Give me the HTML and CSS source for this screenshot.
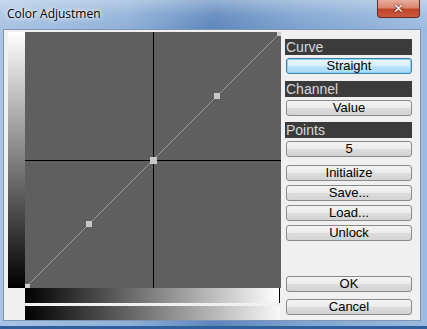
FILE: index.html
```html
<!DOCTYPE html>
<html>
<head>
<meta charset="utf-8">
<link rel="stylesheet" href="styles.css">
</head>
<body>
<div class="window">
  <div class="titlebar">
    <span class="title">Color Adjustmen</span>
    <div class="close"><span class="x">&#x2715;</span></div>
  </div>
  <div class="client">
    <div class="graph">
      <div class="vbar"></div>
      <svg class="canvas" width="256" height="256" viewBox="0 0 256 256">
        <rect x="0" y="0" width="256" height="256" fill="#5f5f5f"/>
        <line x1="128.5" y1="0" x2="128.5" y2="256" stroke="#000" stroke-width="1"/>
        <line x1="0" y1="128.5" x2="256" y2="128.5" stroke="#000" stroke-width="1"/>
        <line x1="0" y1="256" x2="256" y2="0" stroke="#9a9a9a" stroke-width="1"/>
        <rect x="0" y="252" width="5" height="5" fill="#d0d0d0"/>
        <rect x="61" y="189" width="6" height="6" fill="#c8c8c8"/>
        <rect x="125" y="125" width="7" height="7" fill="#c8c8c8"/>
        <rect x="189" y="61" width="6" height="6" fill="#c8c8c8"/>
        <rect x="252" y="0" width="5" height="4" fill="#d0d0d0"/>
      </svg>
      <div class="corner"></div>
      <div class="hbar1"></div>
      <div class="corner2"></div>
      <div class="hbar2"></div>
    </div>
    <div class="panel">
      <div class="head">Curve</div>
      <div class="btn active">Straight</div>
      <div class="head sp7">Channel</div>
      <div class="btn">Value</div>
      <div class="head sp6">Points</div>
      <div class="btn">5</div>
      <div class="btn sp8">Initialize</div>
      <div class="btn sp4">Save...</div>
      <div class="btn sp4">Load...</div>
      <div class="btn sp4">Unlock</div>
      <div class="btn ok">OK</div>
      <div class="btn sp7">Cancel</div>
    </div>
  </div>
</div>
</body>
</html>
```
FILE: styles.css
```css
html, body {
  margin: 0;
  padding: 0;
  width: 427px;
  height: 329px;
  overflow: hidden;
}
.window {
  width: 427px;
  height: 329px;
  box-sizing: border-box;
  background: linear-gradient(90deg, #a9c4e4 0%, #8fb0d8 30%, #5c86bb 50%, #7ea3d0 70%, #9dbbe0 100%);
  padding: 0 6px 9px 3px;
  display: flex;
  flex-direction: column;
  position: relative;
  border-bottom: 3px solid #2f5f9c;
}
.titlebar {
  height: 29px;
  flex: none;
  position: relative;
  background: linear-gradient(180deg, rgba(255,255,255,0.35) 0%, rgba(255,255,255,0.1) 50%, rgba(255,255,255,0) 100%);
  margin: 0 -6px 0 -3px;
}
.title {
  position: absolute;
  left: 7px;
  top: 5px;
  font-family: "Open Sans", "Noto Sans", sans-serif;
  font-size: 12px;
  color: #000;
  text-shadow: 0 0 6px #fff, 0 0 3px #fff;
}
.close {
  position: absolute;
  right: 7px;
  top: 0;
  width: 43px;
  height: 18px;
  box-sizing: border-box;
  border: 1px solid #6b2a1f;
  border-top: none;
  border-radius: 0 0 4px 4px;
  background: linear-gradient(180deg, #e9ab9c 0%, #d88670 45%, #c0442a 55%, #cb5a3e 100%);
  display: flex;
  align-items: center;
  justify-content: center;
}
.x {
  color: #fff;
  font-family: "DejaVu Sans", sans-serif;
  font-weight: bold;
  font-size: 13px;
  line-height: 13px;
  text-shadow: 0 0 2px #5a1a10, 0 0 1px #5a1a10;
}
.client {
  flex: 1;
  background: #f0f0f0;
  border: 1px solid #8096b4;
  display: flex;
  padding: 2px 0 0 4px;
  box-sizing: border-box;
}
.graph {
  display: grid;
  grid-template-columns: 17px 256px;
  grid-template-rows: 256px 15px 14px;
  height: 288px;
}
.vbar {
  background: linear-gradient(180deg, #ffffff 0%, #000000 100%);
}
.canvas {
  display: block;
}
.corner {
  background: #f0f0f0;
}
.hbar1 {
  background: linear-gradient(90deg, #000000 0%, #ffffff 100%);
  border-right: 1px solid #000;
  margin-right: 1px;
}
.corner2 {
  background: #f0f0f0;
}
.hbar2 {
  margin-top: 3px;
  height: 14px;
  background: linear-gradient(90deg, #000000 0%, #f8f8f8 100%);
  margin-right: 1px;
}
.panel {
  width: 127px;
  margin-left: 4px;
  padding-top: 7px;
  display: flex;
  flex-direction: column;
}
.head {
  height: 16px;
  background: #3b3b3b;
  color: #d8d8d8;
  font-family: "Liberation Sans", Arial, sans-serif;
  font-size: 14px;
  line-height: 16px;
  padding-left: 1px;
}
.btn {
  height: 16px;
  box-sizing: border-box;
  margin: 3px 0 0 1px;
  border: 1px solid #8a8a8a;
  border-radius: 3px;
  background: linear-gradient(180deg, #f4f4f4 0%, #ebebeb 50%, #dddddd 51%, #d3d3d3 100%);
  font-family: "Liberation Sans", Arial, sans-serif;
  font-size: 13px;
  line-height: 14px;
  color: #000;
  text-align: center;
}
.btn.active {
  border-color: #3c7fb1;
  background: linear-gradient(180deg, #eaf6fd 0%, #d9f0fc 50%, #bee6fd 51%, #a7d9f5 100%);
  box-shadow: inset 0 0 0 1px #8fd0f5;
}
.sp7 { margin-top: 7px; }
.sp6 { margin-top: 6px; }
.sp8 { margin-top: 8px; }
.sp4 { margin-top: 4px; }
.btn.ok { margin-top: 35px; }
```
